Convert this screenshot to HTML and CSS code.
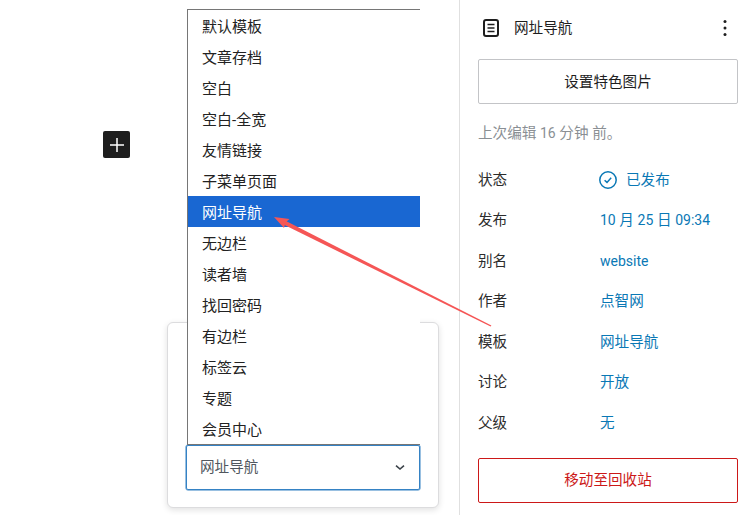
FILE: index.html
```html
<!DOCTYPE html>
<html lang="zh">
<head>
<meta charset="utf-8">
<title>网址导航</title>
<link rel="stylesheet" href="styles.css">
</head>
<body>
<div class="app">
  <main class="canvas">
    <button class="add" aria-label="添加">
      <svg width="24" height="24" viewBox="0 0 24 24"><path d="M11.25 5h1.5v6.25H19v1.5h-6.25V19h-1.5v-6.25H5v-1.5h6.25z" fill="#fff"/></svg>
    </button>
    <section class="card">
      <div class="select">
        <span>网址导航</span>
        <svg width="18" height="18" viewBox="0 0 18 18"><path d="M5 7.6 9 11l4-3.4" fill="none" stroke="#3c434a" stroke-width="1.6"/></svg>
      </div>
    </section>
    <ul class="list">
      <li>默认模板</li>
      <li>文章存档</li>
      <li>空白</li>
      <li>空白-全宽</li>
      <li>友情链接</li>
      <li>子菜单页面</li>
      <li class="on">网址导航</li>
      <li>无边栏</li>
      <li>读者墙</li>
      <li>找回密码</li>
      <li>有边栏</li>
      <li>标签云</li>
      <li>专题</li>
      <li>会员中心</li>
    </ul>
  </main>
  <aside class="side">
    <header class="head">
      <svg class="doc" width="24" height="24" viewBox="0 0 24 24"><rect x="5" y="4" width="14" height="16" rx="2" fill="none" stroke="#1e1e1e" stroke-width="2"/><path d="M8.5 8.5h7M8.5 12h7M8.5 15.5h7" stroke="#1e1e1e" stroke-width="1.5"/></svg>
      <span class="title">网址导航</span>
      <svg class="more" width="24" height="24" viewBox="0 0 24 24"><circle cx="12" cy="5.5" r="1.5" fill="#1e1e1e"/><circle cx="12" cy="12" r="1.5" fill="#1e1e1e"/><circle cx="12" cy="18.5" r="1.5" fill="#1e1e1e"/></svg>
    </header>
    <button class="btn">设置特色图片</button>
    <p class="edited">上次编辑 <span class="latin">16</span> 分钟 前。</p>
    <dl class="meta">
      <dt>状态</dt>
      <dd class="status">
        <svg width="20" height="20" viewBox="0 0 20 20"><circle cx="10" cy="10" r="8.2" fill="none" stroke="#0a78b5" stroke-width="1.5"/><path d="M6.6 10.2 9 12.4l4.2-4.6" fill="none" stroke="#0a78b5" stroke-width="1.5"/></svg>
        已发布
      </dd>
      <dt>发布</dt><dd><span class="latin">10</span> 月 <span class="latin">25</span> 日 <span class="latin">09:34</span></dd>
      <dt>别名</dt><dd><span class="latin">website</span></dd>
      <dt>作者</dt><dd>点智网</dd>
      <dt>模板</dt><dd>网址导航</dd>
      <dt>讨论</dt><dd>开放</dd>
      <dt>父级</dt><dd>无</dd>
    </dl>
    <button class="btn danger">移动至回收站</button>
  </aside>
</div>
<svg class="arrow" width="755" height="515" viewBox="0 0 755 515">
  <path d="M491.4 325.6 490.6 326.6 283.5 224.5 285 220.5z" fill="#f55656"/>
  <path d="M274 217 289.5 219 285.5 222.5 284 228z" fill="#f55656"/>
</svg>
</body>
</html>
```

FILE: styles.css
```css
* { box-sizing: border-box; }
html, body { margin: 0; height: 100%; }
body {
  background: #fff;
  color: #1e1e1e;
  font: 14.6px/20px Roboto, "Noto Sans CJK SC", sans-serif;
  overflow: hidden;
}
.latin { font-size: 14px; }
.app { display: flex; width: 755px; height: 515px; }
.canvas { position: relative; width: 460px; flex: none; border-right: 1px solid #e0e0e0; }
.add {
  position: absolute; left: 103px; top: 131px;
  width: 27px; height: 27px; padding: 0;
  display: flex; align-items: center; justify-content: center;
  background: #1e1e1e; border: 0; border-radius: 2px;
}
.card {
  position: absolute; left: 167px; top: 322px;
  width: 272px; height: 186px;
  padding: 122px 18px 0 18px;
  background: #fff;
  border: 1px solid #dcdcde; border-radius: 6px;
  box-shadow: 0 2px 6px rgba(0,0,0,.12);
}
.select {
  display: flex; align-items: center; justify-content: space-between;
  height: 45px; padding: 0 10px 2px 13px;
  border: 1px solid #3582c4; border-radius: 2px;
  box-shadow: 0 0 0 .5px #3582c4;
  color: #50575e;
}
.list {
  position: absolute; left: 187px; top: 9px;
  width: 233px; margin: 0; padding: 0;
  list-style: none;
  background: #fff;
  border: solid #767676; border-width: 1px 0 1px 1px;
  color: #222;
  font-size: 15px;
}
.list li { height: 31px; line-height: 31px; padding: 2px 0 0 14px; }
.list .on { background: #1967d2; color: #fff; }
.side { flex: 1; padding: 0 17px 0 18px; display: flex; flex-direction: column; }
.head { display: flex; align-items: center; height: 59px; padding-bottom: 4px; }
.doc { margin-left: 1px; }
.title { margin-left: 11px; flex: 1; }
.more { margin-right: 1px; }
.btn {
  flex: none; width: 260px; height: 45px; padding: 0;
  background: #fff; color: #1e1e1e;
  border: 1px solid #c3c4c7; border-radius: 2px;
  font: inherit;
}
.edited { margin: 19px 0 0; color: #8a8f94; }
.meta {
  margin: 16.5px 0 0;
  display: grid; grid-template-columns: 122px 1fr;
  grid-auto-rows: 40.5px; align-items: center;
}
.meta dt { margin: 0; color: #2c2c2c; }
.meta dd { margin: 0; color: #0a78b5; }
.status { display: flex; align-items: center; gap: 8px; margin-left: -2px !important; }
.danger { margin-top: 14.5px; border-color: #cc1818; color: #cc1818; }
.arrow { position: absolute; left: 0; top: 0; pointer-events: none; }
```
